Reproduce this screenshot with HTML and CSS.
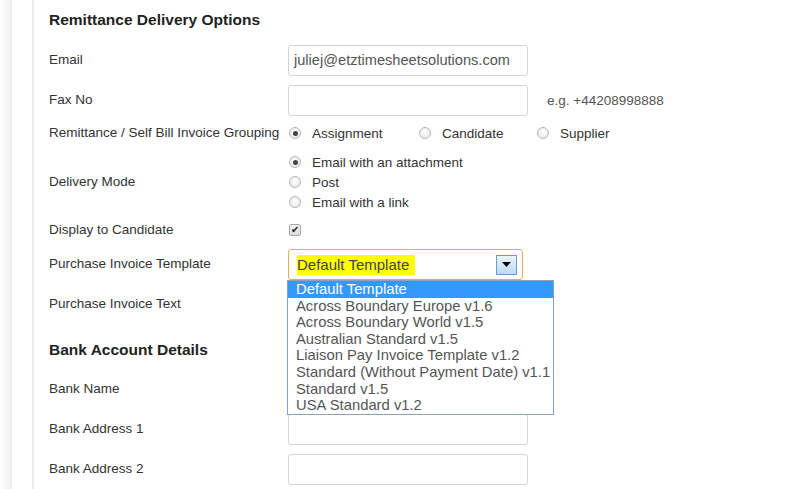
FILE: index.html
```html
<!DOCTYPE html>
<html>
<head>
<meta charset="utf-8">
<link rel="stylesheet" href="styles.css">
</head>
<body>
<div class="page">
  <div class="rail"></div>
  <div class="gutter"></div>
  <div class="content">
    <h3 class="title t1">Remittance Delivery Options</h3>

    <div class="row r-email">
      <div class="label">Email</div>
      <div class="input">juliej@etztimesheetsolutions.com</div>
    </div>
    <div class="row r-fax">
      <div class="label">Fax No</div>
      <div class="input"></div>
      <div class="hint">e.g. +44208998888</div>
    </div>
    <div class="row r-group">
      <div class="label">Remittance / Self Bill Invoice Grouping</div>
      <div class="opts">
        <span class="opt w-assign"><span class="radio on"></span>Assignment</span>
        <span class="opt w-cand"><span class="radio"></span>Candidate</span>
        <span class="opt"><span class="radio"></span>Supplier</span>
      </div>
    </div>
    <div class="row r-delivery">
      <div class="label">Delivery Mode</div>
      <div class="stack">
        <span class="opt"><span class="radio on"></span>Email with an attachment</span>
        <span class="opt"><span class="radio"></span>Post</span>
        <span class="opt"><span class="radio"></span>Email with a link</span>
      </div>
    </div>
    <div class="row r-display">
      <div class="label">Display to Candidate</div>
      <span class="check">&#10004;</span>
    </div>
    <div class="row r-template">
      <div class="label">Purchase Invoice Template</div>
      <div class="select-wrap">
        <div class="select">
          <span class="sel-text">Default Template</span>
          <span class="sel-btn"><svg width="9" height="5" viewBox="0 0 9 5"><path d="M0 0H9L4.5 5Z" fill="#000"/></svg></span>
        </div>
        <ul class="list">
          <li class="active">Default Template</li>
          <li>Across Boundary Europe v1.6</li>
          <li>Across Boundary World v1.5</li>
          <li>Australian Standard v1.5</li>
          <li>Liaison Pay Invoice Template v1.2</li>
          <li>Standard (Without Payment Date) v1.1</li>
          <li>Standard v1.5</li>
          <li>USA Standard v1.2</li>
        </ul>
      </div>
    </div>
    <div class="row r-text">
      <div class="label">Purchase Invoice Text</div>
      <div class="input"></div>
    </div>

    <h3 class="title t2">Bank Account Details</h3>

    <div class="row r-bank">
      <div class="label">Bank Name</div>
      <div class="input"></div>
    </div>
    <div class="row r-addr">
      <div class="label">Bank Address 1</div>
      <div class="input"></div>
    </div>
    <div class="row r-addr">
      <div class="label">Bank Address 2</div>
      <div class="input"></div>
    </div>
  </div>
</div>
</body>
</html>
```
FILE: styles.css
```css
html, body {
  margin: 0;
  padding: 0;
  background: #fff;
  height: 100%;
  overflow: hidden;
}
.page {
  display: flex;
  height: 489px;
  font-family: "Liberation Sans", Arial, sans-serif;
  font-size: 13.5px;
  color: #333;
}
.rail {
  width: 11px;
  background: linear-gradient(to right, #ffffff, #f1f1f1);
  border-right: 1px solid #e8e8e8;
}
.gutter {
  width: 20px;
  border-right: 2px solid #ececec;
}
.content {
  padding-left: 15px;
  display: flex;
  flex-direction: column;
  flex: 1;
}
.title {
  margin: 0;
  font-size: 15.5px;
  font-weight: bold;
  line-height: 24px;
  color: #222;
}
.t1 { margin-top: 8px; }
.t2 { margin-top: 18px; }
.row {
  display: flex;
  align-items: center;
  min-height: 20px;
  margin-top: 9px;
}
.label {
  width: 239px;
  flex: none;
  color: #333;
  position: relative;
  top: -1px;
}
.input {
  width: 240px;
  height: 31px;
  box-sizing: border-box;
  border: 1px solid #d4d4d4;
  border-radius: 3px;
  padding: 0 5px;
  line-height: 29px;
  font-size: 14.6px;
  color: #555;
  flex: none;
}
.hint {
  margin-left: 19px;
  color: #555;
}
.r-email { margin-top: 13px; }
.r-group { margin-top: 7px; height: 20px; }
.r-delivery { margin-top: 9px; }
.r-display { margin-top: 8px; height: 20px; }
.r-bank { margin-top: 12px; }
.r-addr { margin-top: 9px; }
.opts, .stack {
  display: flex;
}
.stack {
  flex-direction: column;
}
.opt {
  display: flex;
  align-items: center;
  height: 20px;
  color: #333;
}
.w-assign { width: 130px; }
.w-cand { width: 118px; }
.radio {
  width: 12px;
  height: 12px;
  box-sizing: border-box;
  border: 1px solid #b5b5b5;
  border-radius: 50%;
  background: radial-gradient(circle at 50% 40%, #ffffff, #e4e4e4);
  margin: 0 11px 0 1px;
  position: relative;
  flex: none;
}
.radio.on::after {
  content: "";
  position: absolute;
  left: 2.5px;
  top: 2.5px;
  width: 5px;
  height: 5px;
  border-radius: 50%;
  background: #444;
}
.check {
  width: 12px;
  height: 12px;
  box-sizing: border-box;
  border: 1px solid #aaa;
  border-radius: 2px;
  background: linear-gradient(#f4f4f4, #dcdcdc);
  font-size: 10px;
  line-height: 10px;
  text-align: center;
  color: #222;
  margin-left: 1px;
}
.select-wrap {
  position: relative;
}
.select {
  width: 235px;
  height: 31px;
  box-sizing: border-box;
  border: 1px solid #e6ac52;
  border-radius: 3px;
  display: flex;
  align-items: center;
  padding: 0 4px 0 8px;
  justify-content: space-between;
}
.sel-text {
  background: #ffff00;
  color: #444;
  font-size: 15px;
  line-height: 20px;
  padding-right: 6px;
}
.sel-btn {
  width: 21px;
  height: 20px;
  box-sizing: border-box;
  border: 1px solid #6d9ccf;
  background: linear-gradient(#eaf4fd, #b9dcf6);
  display: flex;
  align-items: center;
  justify-content: center;
  margin-right: 1px;
}
.list {
  position: absolute;
  left: -1px;
  top: 31px;
  width: 267px;
  margin: 0;
  padding: 0;
  list-style: none;
  box-sizing: border-box;
  border: 1px solid #8aa2bd;
  background: #fff;
  font-size: 14.8px;
  color: #555;
  z-index: 5;
}
.list li {
  height: 16.6px;
  line-height: 16.6px;
  padding-left: 8px;
  white-space: nowrap;
}
.list li.active {
  background: #3399ff;
  color: #fff;
}
```
